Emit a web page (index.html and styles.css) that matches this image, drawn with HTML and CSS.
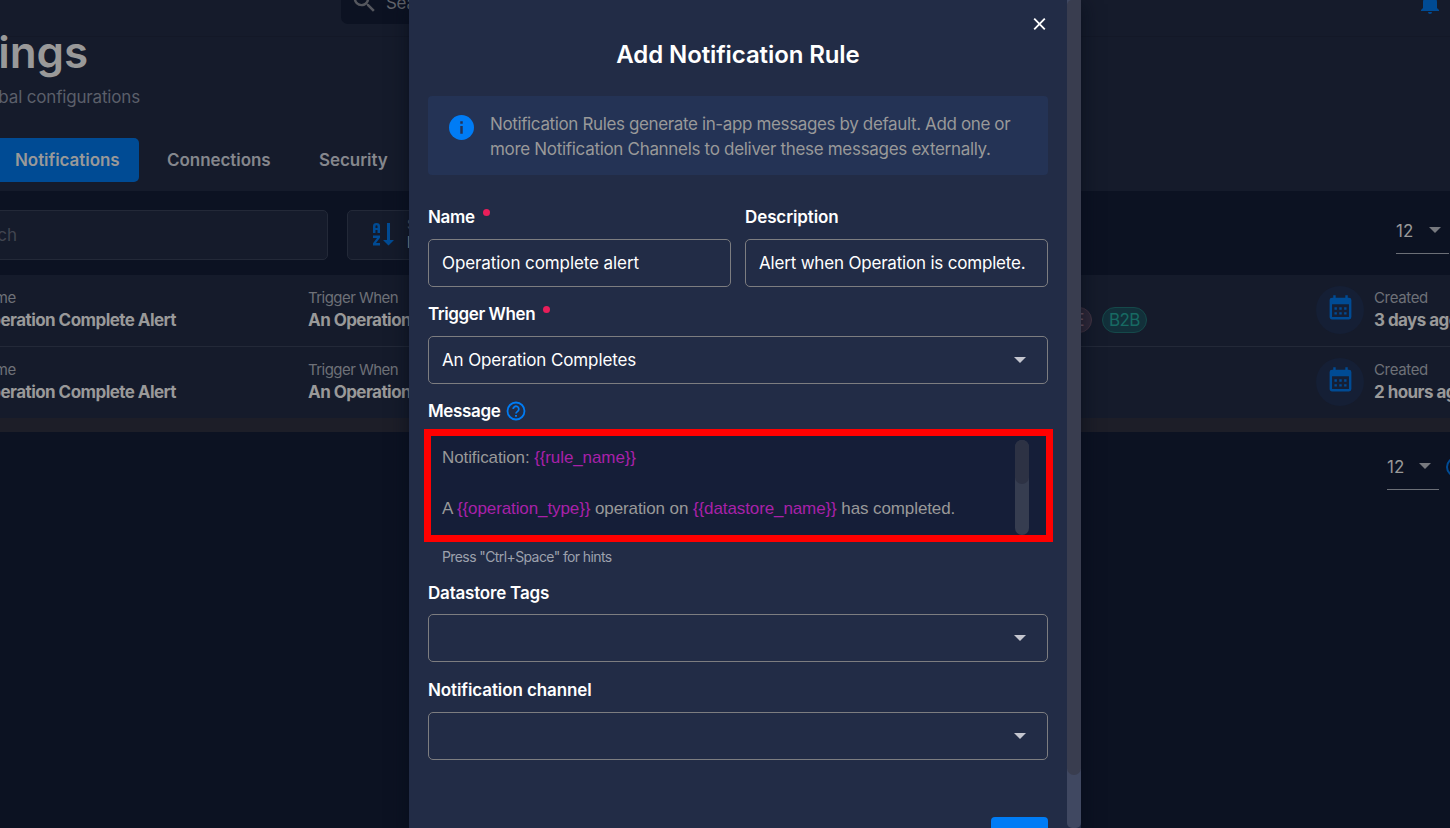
FILE: index.html
```html
<!DOCTYPE html>
<html lang="en">
<head>
<meta charset="utf-8">
<title>Add Notification Rule</title>
<link rel="stylesheet" href="styles.css">
</head>
<body>
<div class="page">
  <header class="topbar">
    <div class="global-search">
      <svg class="search-icon" viewBox="0 0 24 24"><path d="M15.5 14h-.79l-.28-.27A6.47 6.47 0 0 0 16 9.5 6.5 6.5 0 1 0 9.5 16c1.61 0 3.09-.59 4.23-1.57l.27.28v.79l5 4.99L20.49 19l-4.99-5zm-6 0C7.01 14 5 11.99 5 9.5S7.01 5 9.5 5 14 7.01 14 9.5 11.99 14 9.5 14z"/></svg>
      <span>Search</span>
    </div>
    <svg class="bell" viewBox="0 0 24 24"><path d="M21 19v1H3v-1l2-2v-6c0-3.1 2.03-5.83 5-6.71V4a2 2 0 0 1 4 0v.29c2.97.88 5 3.61 5 6.71v6l2 2m-7 2a2 2 0 0 1-4 0"/></svg>
  </header>
  <section class="heading">
    <div class="clip-left"><h1>Settings</h1></div>
    <div class="clip-left subtitle-row"><p class="subtitle">Manage global configurations</p></div>
    <nav class="tabs">
      <a class="tab tab-active">Notifications</a>
      <a class="tab tab-conn">Connections</a>
      <a class="tab tab-sec">Security</a>
    </nav>
  </section>
  <section class="filters">
    <div class="filter-search"><span>Search</span></div>
    <div class="sort">
      <svg class="sort-icon" viewBox="0 0 22 23"><path d="M1 10V3q0-3 3.500-3t3.500 3v7H5.500V7h-2v3zM3.500 5h2V3q0-.8-1-.8t-1 .8zM1 12.500h7v2.300L4 20h4v2.500H1v-2.300L5 15H1zM15 0h3v17h4l-5.500 5.500L11 17h4z"/></svg>
      <div class="sort-text"><span>Sort by</span><b>Name</b></div>
    </div>
    <div class="per-page">12<i class="caret"></i></div>
  </section>
  <section class="table">
    <div class="row">
      <div class="col-name"><div class="cell-in"><span class="k">Name</span><b class="v">Operation Complete Alert</b></div></div>
      <div class="col-trigger"><span class="k">Trigger When</span><b class="v">An Operation Completes</b></div>
      <div class="chips"><span class="chip chip-rose">LINE</span><span class="chip chip-teal">B2B</span></div>
      <div class="avatar"><svg viewBox="0 0 24 24"><path d="M7 11h2v2H7zm14-6v14a2 2 0 0 1-2 2H5c-1.110 0-2-.9-2-2V5a2 2 0 0 1 2-2h1V1h2v2h8V1h2v2h1a2 2 0 0 1 2 2M5 8.500V19h14V8.500zm10 4.500v-2h2v2zm-4 0v-2h2v2zm-4 2h2v2H7zm8 2v-2h2v2zm-4 0v-2h2v2z"/></svg></div>
      <div class="col-created"><span class="k">Created</span><b class="v">3 days ago</b></div>
    </div>
    <div class="row">
      <div class="col-name"><div class="cell-in"><span class="k">Name</span><b class="v">Operation Complete Alert</b></div></div>
      <div class="col-trigger"><span class="k">Trigger When</span><b class="v">An Operation Completes</b></div>
      <div class="chips"></div>
      <div class="avatar"><svg viewBox="0 0 24 24"><path d="M7 11h2v2H7zm14-6v14a2 2 0 0 1-2 2H5c-1.110 0-2-.9-2-2V5a2 2 0 0 1 2-2h1V1h2v2h8V1h2v2h1a2 2 0 0 1 2 2M5 8.500V19h14V8.500zm10 4.500v-2h2v2zm-4 0v-2h2v2zm-4 2h2v2H7zm8 2v-2h2v2zm-4 0v-2h2v2z"/></svg></div>
      <div class="col-created"><span class="k">Created</span><b class="v">2 hours ago</b></div>
    </div>
    <div class="table-scroll"></div>
  </section>
  <footer class="pager">
    <div class="per-page">12<i class="caret"></i></div>
    <div class="pager-ring"></div>
  </footer>
</div>

<div class="modal">
  <div class="modal-body">
    <svg class="close" viewBox="0 0 14 14"><path d="M1.300 1.300l11.400 11.400M12.700 1.300L1.300 12.700"/></svg>
    <h2>Add Notification Rule</h2>
    <div class="info">
      <svg class="info-icon" viewBox="0 0 24 24"><circle cx="12" cy="12" r="12"/><path d="M10.800 6h2.400v2.400h-2.400zM10.800 10.500h2.400V18h-2.400z"/></svg>
      <p><span class="info-a">Notification Rules generate in-app messages by default. Add one or</span><br><span class="info-b">more Notification Channels to deliver these messages externally.</span></p>
    </div>
    <div class="pair">
      <div><div class="label"><span class="l-name">Name</span><i class="req"></i></div><div class="field"><span class="f-name">Operation complete alert</span></div></div>
      <div><div class="label"><span class="l-desc">Description</span></div><div class="field"><span class="f-desc">Alert when Operation is complete.</span></div></div>
    </div>
    <div class="label"><span class="l-trigger">Trigger When</span><i class="req"></i></div>
    <div class="field"><span class="f-trigger">An Operation Completes</span><i class="caret"></i></div>
    <div class="label"><span class="l-msg">Message</span>
      <svg class="help" viewBox="0 0 20 20"><circle cx="10" cy="10" r="8.500"/><path d="M7.200 8.100a2.800 2.800 0 1 1 4.500 2.200C10.600 11.100 10 11.500 10 12.600"/><path class="dot" d="M9 13.900h2v1.900H9z"/></svg>
    </div>
    <div class="editor">
      <div class="code">Notification: <em>{{rule_name}}</em><br><br>A <em>{{operation_type}}</em> operation on <em>{{datastore_name}}</em> has completed.</div>
      <div class="editor-track"><div class="editor-thumb"></div></div>
      <div class="highlight"></div>
    </div>
    <div class="hint"><span>Press "Ctrl+Space" for hints</span></div>
    <div class="label label-tags"><span class="l-tags">Datastore Tags</span></div>
    <div class="field"><i class="caret"></i></div>
    <div class="label label-channel"><span class="l-channel">Notification channel</span></div>
    <div class="field"><i class="caret"></i></div>
    <div class="actions"><button class="save" aria-label="Save"></button></div>
  </div>
  <div class="modal-track"><div class="modal-thumb"></div></div>
</div>
</body>
</html>
```
FILE: styles.css
```css
* { box-sizing: border-box; }
html, body { margin: 0; width: 1450px; height: 828px; overflow: hidden; }
body { position: relative; background: #0c1222; font-family: Inter, "Open Sans", sans-serif; font-size: 17px; color: #999; white-space: nowrap; }
h1, h2, p { margin: 0; }

.page { width: 1450px; height: 828px; overflow: hidden; background: #0c1222; }
.topbar { height: 37px; background: #151b2b; border-bottom: 1px solid #131827; display: flex; justify-content: space-between; padding: 0 8px 0 341px; }
.global-search { width: 420px; height: 24px; background: #0c1222; border-radius: 0 0 7px 7px; display: flex; padding-left: 9px; color: #62656c; line-height: 6px; }
.global-search span { margin-left: 7px; letter-spacing: -.3px; }
.search-icon { width: 29px; height: 29px; margin-top: -13px; fill: #55575e; }
.bell { width: 24px; height: 24px; margin: -9px 0 0; fill: #004b94; }

.heading { height: 154px; background: #151b2b; }
.clip-left { width: 88px; display: flex; justify-content: flex-end; }
h1 { font-size: 44px; font-weight: 600; line-height: 44px; margin-top: -7px; color: #999; letter-spacing: -.1px; clip-path: inset(5px 0 -10px 0); }
.subtitle-row { width: 140px; margin-top: 12px; }
.subtitle { line-height: 22px; font-size: 17px; color: #5b5f6a; letter-spacing: -.17px; }
.tabs { display: flex; height: 44px; margin-top: 30px; line-height: 44px; font-weight: 600; color: #85878d; letter-spacing: -.05px; }
.tab-active { width: 139px; padding-left: 15px; background: #004b94; border-radius: 0 5px 5px 0; color: #999; }
.tab-conn { width: 152px; padding-left: 28px; }
.tab-sec { padding-left: 28px; }

.filters { height: 84px; display: flex; align-items: flex-start; padding-top: 19px; }
.filter-search { width: 329px; height: 50px; margin-left: -1px; background: #151b2b; border: 1px solid #232938; border-radius: 0 5px 5px 0; line-height: 49px; color: #414550; }
.filter-search span { display: flex; justify-content: flex-end; width: 17px; }
.sort { width: 400px; height: 50px; margin-left: 19px; background: #151b2b; border: 1px solid #232938; border-radius: 5px; display: flex; padding: 12px 0 0 24px; }
.sort-icon { width: 22px; height: 23px; fill: #004b94; }
.sort-text { margin-left: 13px; display: flex; flex-direction: column; font-size: 13px; line-height: 18px; margin-top: -8px; }
.sort-text span { color: #62656c; }
.sort-text b { font-size: 16px; }
.per-page { width: 53px; height: 44px; line-height: 43px; border-bottom: 1px solid #6c6f77; display: flex; align-items: flex-start; justify-content: space-between; color: #999; padding-right: 8px; }
.per-page .caret { margin-top: 17px; border-top-color: #77797f; }
.filters .per-page { margin-left: 649px; }
.caret { width: 0; height: 0; border: 6.5px solid transparent; border-top-color: #c4c6cf; border-bottom-width: 0; }

.table { height: 157px; background: #151b2b; }
.row { height: 72px; display: flex; border-bottom: 1px solid #232938; line-height: 22px; }
.row > div { flex-shrink: 0; }
.row + .row { height: 71px; border: 0; }
.col-name { width: 308px; padding-top: 12px; }
.cell-in { width: 176px; display: flex; flex-direction: column; }
.col-name .k { width: 16px; display: flex; justify-content: flex-end; }
.col-name .v { width: 176px; display: flex; justify-content: flex-end; }
.k { display: block; font-size: 15px; color: #6e7178; letter-spacing: -.35px; }
.v { display: block; font-weight: 700; color: #999; letter-spacing: -.55px; }
.col-trigger { width: 592px; padding-top: 12px; }
.col-trigger .k { letter-spacing: -.55px; }
.chips { width: 416px; padding-top: 32px; display: flex; gap: 10px; padding-right: 169px; justify-content: flex-end; }
.chip { height: 26px; line-height: 24px; border-radius: 13px; border: 1px solid; padding: 0 7px; flex-shrink: 0; font-size: 17px; letter-spacing: -.6px; }
.chip-rose { color: #72596a; background: #30293a; border-color: #453543; }
.chip-teal { width: 45px; color: #176a63; background: #12303a; border-color: #15494a; text-align: center; padding: 0; }
.avatar { width: 48px; height: 48px; margin-top: 11px; border-radius: 50%; background: #151f35; display: flex; align-items: center; justify-content: center; }
.avatar svg { width: 29px; height: 29px; margin-top: -4px; fill: #004b94; }
.col-created { margin-left: 10px; padding-top: 12px; }
.table-scroll { height: 14px; background: #1d1e28; }
.pager { width: 1480px; display: flex; padding: 14px 0 0 1387px; }
.pager .per-page { width: 52px; }
.pager-ring { width: 20px; height: 20px; margin: 11px 0 0 7px; border: 2px solid #004b94; border-radius: 50%; }

.modal { position: absolute; left: 409px; top: 0; width: 672px; height: 828px; display: flex; background: #222c46; box-shadow: 0 6px 17px 2px rgba(5, 12, 25, .6); }
.modal-body { position: relative; width: 658px; padding: 38px 19px 0; }
.modal-track { width: 14px; height: 828px; background: #404861; border-radius: 0 0 5px 5px; }
.modal-thumb { height: 775px; background: #393d4f; border-radius: 5px 0 7px 7px; }
.close { position: absolute; left: 624px; top: 17px; width: 13px; height: 14px; stroke: #fff; stroke-width: 2; fill: none; }
h2 { font-size: 24px; line-height: 33px; font-weight: 600; color: #fff; text-align: center; letter-spacing: -.1px; }
.info { height: 79px; margin: 25px 0 15px; background: #243355; border-radius: 4px; display: flex; padding: 16px 21px; }
.info-icon { width: 25px; height: 25px; margin: 3px 16px 0 0; fill: #007cf5; flex-shrink: 0; }
.info-icon path { fill: #243355; }
.info p { line-height: 25px; color: #999; }
.info-a { letter-spacing: -.37px; }
.info-b { letter-spacing: -.31px; }
.pair { display: grid; grid-template-columns: 303px 303px; gap: 14px; }
.label { height: 49px; padding-top: 5px; display: flex; align-items: center; font-weight: 600; color: #fff; letter-spacing: -.2px; }
.l-name, .l-msg { letter-spacing: -.35px; }
.l-trigger { letter-spacing: -.42px; }
.l-desc, .l-channel { letter-spacing: -.1px; }
.field { height: 48px; border: 1px solid #7d7d80; border-radius: 5px; padding: 0 21.5px 0 13px; display: flex; align-items: center; justify-content: space-between; color: #fff; }
.field .caret { margin-left: auto; }
.f-name { letter-spacing: -.09px; }
.f-desc { letter-spacing: -.19px; }
.f-trigger { letter-spacing: -.12px; }
.req { width: 7px; height: 7px; border-radius: 50%; background: #e91e5a; margin: -10px 0 0 8px; }
.help { width: 20px; height: 20px; margin-left: 6px; fill: none; stroke: #007cf5; stroke-width: 1.800; }
.help .dot { fill: #007cf5; stroke: none; }
.editor { position: relative; height: 105px; background: #151e38; display: flex; justify-content: space-between; padding: 0 19px 0 14px; }
.code { font-family: "Liberation Sans", Arial, sans-serif; font-size: 17px; line-height: 25.500px; padding-top: 11.500px; color: #999; letter-spacing: -.1px; }
.code em { font-style: normal; color: #a821a9; }
.editor-track { width: 14px; height: 95px; margin-top: 7px; background: #363d50; border-radius: 7px; }
.editor-thumb { height: 44px; background: #2d3244; border-radius: 7px; }
.highlight { position: absolute; left: -4px; top: -4px; width: 629px; height: 113px; border: 7px solid #f00; }
.hint { height: 27px; padding: 8px 14px 0; line-height: 22px; font-size: 14px; color: #9da1ad; letter-spacing: -.6px; }
.label-tags { padding-top: 6px; }
.label-channel { height: 50px; padding-top: 6px; }
.actions { display: flex; justify-content: flex-end; padding-top: 57px; }
.save { width: 57px; height: 11px; border: 0; border-radius: 4px 4px 0 0; background: #007cf5; }
```
